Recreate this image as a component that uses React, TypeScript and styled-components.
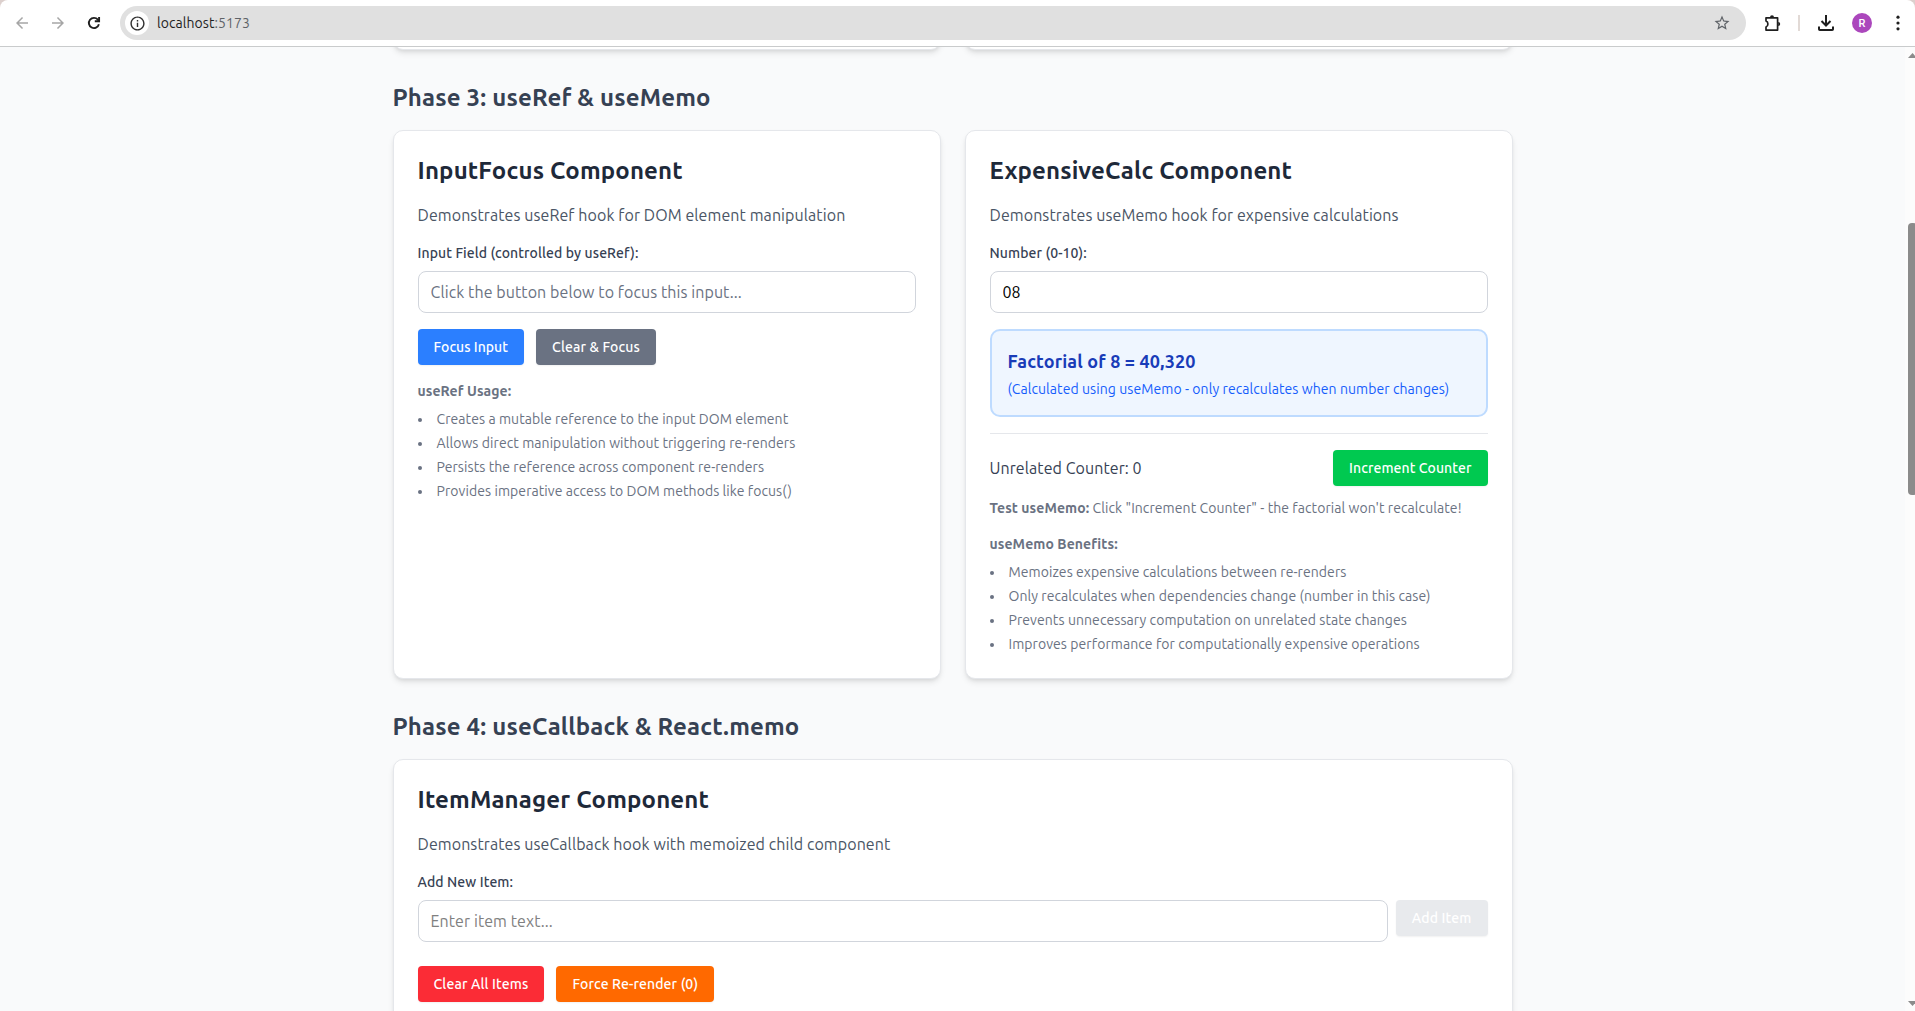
import React from 'react';
import styled, { createGlobalStyle } from 'styled-components';
import { MdArrowBack, MdArrowForward, MdInfoOutline, MdStarBorder } from 'react-icons/md';

const GlobalStyle = createGlobalStyle`
  *, *::before, *::after { box-sizing: border-box; }
  html, body { margin: 0; padding: 0; overflow: hidden; background: #dcd0cd; }
  body, input, button { font-family: Ubuntu, 'Noto Sans', sans-serif; }
  h2, h3, p, ul { margin: 0; padding: 0; }
`;

const Window = styled.div`
  display: flex;
  flex-direction: column;
  width: 100vw;
  height: 100vh;
  overflow: hidden;
`;

/* Browser chrome */

const Toolbar = styled.header`
  flex: none;
  display: flex;
  align-items: center;
  height: 47px;
  padding: 0 8px 0 13px;
  background: #fff;
  border-bottom: 1px solid #c9cbcc;
  border-radius: 8px 8px 0 0;
`;

const NavButtons = styled.div`
  display: flex;
  align-items: center;
  gap: 18px;
  width: 107px;
  color: #a6a6a6;
`;

const NavIcon = styled.span<{ $active?: boolean }>`
  display: flex;
  color: ${(p) => (p.$active ? '#1f1f1f' : 'inherit')};
`;

const AddressBar = styled.div`
  flex: 1;
  display: flex;
  align-items: center;
  height: 34px;
  padding: 0 15px 0 5px;
  border-radius: 17px;
  background: #e0e0e0;
  color: #5f6368;
`;

const SiteInfo = styled.span`
  display: flex;
  align-items: center;
  justify-content: center;
  width: 24px;
  height: 24px;
  margin-right: 8px;
  border-radius: 50%;
  background: #fff;
  color: #303030;
`;

const Url = styled.span`
  flex: 1;
  font-size: 14px;
  line-height: 20px;
  letter-spacing: 0.07px;
  color: #5f6368;
`;

const Host = styled.span`
  color: #1f1f1f;
`;

const Actions = styled.div`
  display: flex;
  align-items: center;
  width: 161px;
  padding-left: 16px;
`;

const Divider = styled.span`
  width: 2px;
  height: 16px;
  margin: 0 16px;
  background: #e2dad6;
`;

const Avatar = styled.span`
  display: flex;
  align-items: center;
  justify-content: center;
  width: 20px;
  height: 20px;
  margin: 0 23px 0 16px;
  border-radius: 50%;
  background: #ab47bc;
  color: #fff;
  font: 500 11px Roboto, sans-serif;
`;

/* Page */

const Viewport = styled.div`
  flex: 1;
  display: flex;
  min-height: 0;
  background: #f9fafb;
`;

const Page = styled.main`
  flex: 1;
  overflow: hidden;
`;

const Content = styled.div`
  width: 1120px;
  margin: 0 auto;
`;

const Scrollbar = styled.div`
  flex: none;
  display: flex;
  flex-direction: column;
  justify-content: space-between;
  width: 10px;
  padding: 6px 0 5px 3px;
  overflow: hidden;
  background: #fcfcfc;
`;

const Thumb = styled.div`
  width: 9px;
  height: 272px;
  margin: 165px 0 auto;
  border-radius: 4px;
  background: #8b8b8b;
`;

const Arrow = styled.svg`
  display: block;
  flex: none;
  fill: #8b8b8b;
`;

const Section = styled.section`
  margin-bottom: 32px;
`;

const PreviousSection = styled(Section)`
  display: grid;
  grid-template-columns: 1fr 1fr;
  gap: 24px;
  height: 60px;
  margin-top: -57px;
`;

const SectionTitle = styled.h2`
  margin-bottom: 16px;
  font-size: 24px;
  font-weight: 700;
  line-height: 32px;
  letter-spacing: 0.17px;
  color: #364153;
`;

const Columns = styled.div`
  display: grid;
  grid-template-columns: 1fr 1fr;
  gap: 24px;
`;

const Card = styled.article`
  padding: 24px;
  border: 1px solid #e5e7eb;
  border-radius: 10px;
  background: #fff;
  box-shadow: 0 4px 6px -1px rgba(0, 0, 0, 0.1), 0 2px 4px -2px rgba(0, 0, 0, 0.1);
`;

const TallCard = styled(Card)`
  height: 400px;
`;

const CardTitle = styled.h3`
  margin-bottom: 16px;
  font-size: 24px;
  font-weight: 700;
  line-height: 32px;
  letter-spacing: 0.17px;
  color: #1e2939;
`;

const Description = styled.p`
  margin-bottom: 16px;
  font-size: 16px;
  line-height: 24px;
  letter-spacing: 0.085px;
  color: #4a5565;
`;

const Label = styled.label`
  display: block;
  margin-bottom: 8px;
  font-size: 14px;
  font-weight: 500;
  line-height: 20px;
  letter-spacing: 0.1px;
  color: #364153;
`;

const TextInput = styled.input<{ $hint?: string }>`
  display: block;
  width: 100%;
  height: 42px;
  padding: 8px 12px;
  border: 1px solid #d1d5dc;
  border-radius: 8px;
  outline: none;
  background: #fff;
  color: #000;
  font-size: 16px;
  line-height: 24px;
  letter-spacing: 0.08px;
  &::placeholder { color: ${(p) => p.$hint ?? '#6a7282'}; opacity: 1; }
`;

const ButtonRow = styled.div<{ $top: number }>`
  display: flex;
  gap: 12px;
  margin-top: ${(p) => p.$top}px;
`;

const Button = styled.button<{ $color: string; $tracking?: number }>`
  flex: none;
  height: 36px;
  padding: 8px 16px;
  border: 0;
  border-radius: 4px;
  background: ${(p) => p.$color};
  color: #fff;
  font-size: 14px;
  font-weight: 500;
  line-height: 20px;
  letter-spacing: ${(p) => p.$tracking ?? 0.13}px;
  white-space: nowrap;
  box-shadow: 0 1px 2px rgba(0, 0, 0, 0.06);
`;

const ListHeading = styled.p`
  margin: 16px 0 8px;
  font-size: 14px;
  font-weight: 700;
  line-height: 20px;
  letter-spacing: 0.08px;
  color: #6a7282;
`;

const BulletList = styled.ul`
  display: flex;
  flex-direction: column;
  gap: 4px;
  list-style: disc inside;
  font-size: 14px;
  line-height: 20px;
  letter-spacing: 0.075px;
  color: #6a7282;
`;

const Result = styled.div`
  margin-top: 16px;
  padding: 16px;
  border: 2px solid #bedbff;
  border-radius: 10px;
  background: #eff6ff;
`;

const ResultValue = styled.p`
  font-size: 18px;
  font-weight: 700;
  line-height: 28px;
  letter-spacing: 0.13px;
  color: #193cb8;
`;

const ResultNote = styled.p`
  margin-top: 4px;
  font-size: 14px;
  line-height: 20px;
  letter-spacing: 0.075px;
  color: #155dfc;
`;

const CounterRow = styled.div`
  display: flex;
  align-items: center;
  justify-content: space-between;
  margin-top: 16px;
  padding-top: 16px;
  border-top: 1px solid #e5e7eb;
  font-size: 16px;
  line-height: 24px;
  letter-spacing: 0.07px;
  color: #364153;
`;

const Tip = styled.p`
  margin-top: 12px;
  font-size: 14px;
  line-height: 20px;
  letter-spacing: 0.075px;
  color: #6a7282;
`;

const AddRow = styled.div`
  display: flex;
  align-items: flex-start;
  gap: 8px;
`;

const usageItems = [
  'Creates a mutable reference to the input DOM element',
  'Allows direct manipulation without triggering re-renders',
  'Persists the reference across component re-renders',
  'Provides imperative access to DOM methods like focus()',
];

const benefitItems = [
  'Memoizes expensive calculations between re-renders',
  'Only recalculates when dependencies change (number in this case)',
  'Prevents unnecessary computation on unrelated state changes',
  'Improves performance for computationally expensive operations',
];

function Bullets({ items }: { items: string[] }) {
  return (
    <BulletList>
      {items.map((text) => (
        <li key={text}>{text}</li>
      ))}
    </BulletList>
  );
}

function BrowserToolbar() {
  return (
    <Toolbar>
      <NavButtons>
        <NavIcon><MdArrowBack size={18} /></NavIcon>
        <NavIcon><MdArrowForward size={18} /></NavIcon>
        <NavIcon $active>
          <svg width="18" height="18" viewBox="0 0 18 18" fill="none" stroke="currentColor" strokeWidth="1.9">
            <path d="M13.9 10.3A5.1 5.1 0 1 1 12.9 5.7L14 7" />
            <path d="M14.1 3V7.3H9.8" />
          </svg>
        </NavIcon>
      </NavButtons>
      <AddressBar>
        <SiteInfo><MdInfoOutline size={17} /></SiteInfo>
        <Url><Host>localhost</Host>:5173</Url>
        <MdStarBorder size={18} />
      </AddressBar>
      <Actions>
        <svg width="20" height="20" viewBox="0 0 20 20" fill="none">
          <path
            d="M4 4.8H15.6V17.1H4V14C5.3 13.6 5.9 12.4 5.9 11S5.3 8.4 4 8Z"
            stroke="#1f1f1f"
            strokeWidth="1.7"
            strokeLinejoin="round"
          />
          <path d="M8 4.2A2 2 0 0 1 12 4.2ZM16.2 9A2 2 0 0 1 16.2 13Z" fill="#1f1f1f" />
        </svg>
        <Divider />
        <svg width="20" height="20" viewBox="0 0 20 20" fill="none" stroke="#1f1f1f" strokeWidth="2">
          <path d="M10 2V12M5.5 8L10 12.5L14.5 8" />
          <path d="M3 13.5V16.2Q3 17 3.8 17H16.2Q17 17 17 16.2V13.5" />
        </svg>
        <Avatar>R</Avatar>
        <svg width="6" height="16" viewBox="0 0 6 16" fill="#1f1f1f">
          <circle cx="3" cy="2.2" r="1.6" />
          <circle cx="3" cy="8" r="1.6" />
          <circle cx="3" cy="13.8" r="1.6" />
        </svg>
      </Actions>
    </Toolbar>
  );
}

function InputFocus() {
  return (
    <Card>
      <CardTitle>InputFocus Component</CardTitle>
      <Description>Demonstrates useRef hook for DOM element manipulation</Description>
      <Label>Input Field (controlled by useRef):</Label>
      <TextInput placeholder="Click the button below to focus this input..." />
      <ButtonRow $top={16}>
        <Button $color="#2b7fff" $tracking={0.03}>Focus Input</Button>
        <Button $color="#6a7282">Clear &amp; Focus</Button>
      </ButtonRow>
      <ListHeading>useRef Usage:</ListHeading>
      <Bullets items={usageItems} />
    </Card>
  );
}

function ExpensiveCalc() {
  return (
    <Card>
      <CardTitle>ExpensiveCalc Component</CardTitle>
      <Description>Demonstrates useMemo hook for expensive calculations</Description>
      <Label>Number (0-10):</Label>
      <TextInput defaultValue="08" />
      <Result>
        <ResultValue>Factorial of 8 = 40,320</ResultValue>
        <ResultNote>(Calculated using useMemo - only recalculates when number changes)</ResultNote>
      </Result>
      <CounterRow>
        <span>Unrelated Counter: 0</span>
        <Button $color="#00c950" $tracking={0.08}>Increment Counter</Button>
      </CounterRow>
      <Tip>
        <strong>Test useMemo:</strong> Click "Increment Counter" - the factorial won't recalculate!
      </Tip>
      <ListHeading>useMemo Benefits:</ListHeading>
      <Bullets items={benefitItems} />
    </Card>
  );
}

function ItemManager() {
  return (
    <TallCard>
      <CardTitle>ItemManager Component</CardTitle>
      <Description>Demonstrates useCallback hook with memoized child component</Description>
      <Label>Add New Item:</Label>
      <AddRow>
        <TextInput $hint="#808080" placeholder="Enter item text..." />
        <Button $color="#e8eaed">Add Item</Button>
      </AddRow>
      <ButtonRow $top={24}>
        <Button $color="#fb2c36">Clear All Items</Button>
        <Button $color="#ff6900">Force Re-render (0)</Button>
      </ButtonRow>
    </TallCard>
  );
}

export default function App() {
  return (
    <>
      <GlobalStyle />
      <Window>
        <BrowserToolbar />
        <Viewport>
          <Page>
            <Content>
              <PreviousSection>
                <Card />
                <Card />
              </PreviousSection>
              <Section>
                <SectionTitle>Phase 3: useRef &amp; useMemo</SectionTitle>
                <Columns>
                  <InputFocus />
                  <ExpensiveCalc />
                </Columns>
              </Section>
              <Section>
                <SectionTitle>Phase 4: useCallback &amp; React.memo</SectionTitle>
                <ItemManager />
              </Section>
            </Content>
          </Page>
          <Scrollbar>
            <Arrow width="9" height="5" viewBox="0 0 9 5"><path d="M4.5 0L9 5H0Z" /></Arrow>
            <Thumb />
            <Arrow width="9" height="5" viewBox="0 0 9 5"><path d="M0 0H9L4.5 5Z" /></Arrow>
          </Scrollbar>
        </Viewport>
      </Window>
    </>
  );
}
